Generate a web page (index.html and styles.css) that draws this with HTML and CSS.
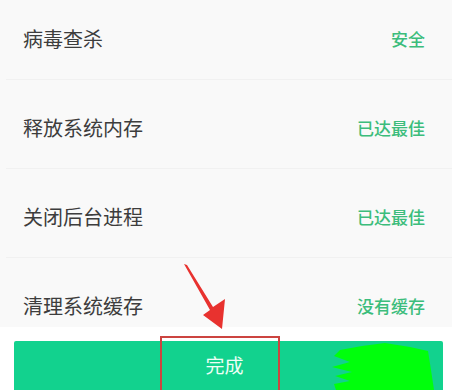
FILE: index.html
```html
<!DOCTYPE html>
<html lang="zh-CN">
<head>
  <meta charset="UTF-8" />
  <meta name="viewport" content="width=device-width, initial-scale=1.0"/>
  <title>清理完成</title>
  <link rel="stylesheet" href="styles.css">
</head>
<body>
  <div class="screen">
    <div class="list-wrap">
      <div class="list">
        <div class="row">
          <span class="label">病毒查杀</span>
          <span class="status">安全</span>
        </div>
        <div class="row">
          <span class="label">释放系统内存</span>
          <span class="status">已达最佳</span>
        </div>
        <div class="row">
          <span class="label">关闭后台进程</span>
          <span class="status">已达最佳</span>
        </div>
        <div class="row">
          <span class="label">清理系统缓存</span>
          <span class="status">没有缓存</span>
        </div>
      </div>
    </div>

    <div class="footer">
      <button class="done-btn">完成</button>
    </div>

    <!-- annotation marks drawn over the screenshot -->
    <svg class="arrow" width="452" height="390" viewBox="0 0 452 390">
      <polygon points="184,264 187,265 213,307 225,299 222,329 203,315 210,310" fill="#e8322f"/>
    </svg>
    <div class="highlight"></div>
    <svg class="scribble" width="452" height="390" viewBox="0 0 452 390">
      <path d="M340,350 L362,346 L385,343 L410,347 L428,351 L431,370 L434,390 L336,390 L334,384 L350,381 L335,376 L352,372 L332,367 L350,362 L334,356 Z" fill="#00ff0c"/>
    </svg>
  </div>
</body>
</html>
```

FILE: styles.css
```css
body {
  margin: 0;
  padding: 0;
  background: #fff;
  font-family: "Noto Sans CJK SC", "Noto Sans", sans-serif;
}
.screen {
  position: relative;
  width: 452px;
  height: 390px;
  overflow: hidden;
}
.list-wrap {
  height: 327px;
  overflow: hidden;
  background: #f9f9f9;
}
.list {
  margin-top: -9px;
}
.row {
  box-sizing: border-box;
  height: 89px;
  margin-left: 6px;
  padding: 7px 27px 0 17px;
  display: flex;
  align-items: center;
  justify-content: space-between;
  border-bottom: 1px solid #f1f1f1;
}
.label {
  font-size: 20px;
  color: #3d3d3d;
}
.status {
  font-size: 17px;
  font-weight: 500;
  color: #3cbd7c;
}
.footer {
  height: 63px;
  padding: 14px 9px 0 14px;
  box-sizing: border-box;
  background: #fff;
}
.done-btn {
  display: block;
  width: 100%;
  height: 60px;
  border: none;
  border-radius: 2px;
  background: #12d28e;
  color: #eefff6;
  font-family: inherit;
  font-size: 19px;
  padding: 0 0 14px 0;
  text-indent: -8px;
}
.arrow,
.scribble {
  position: absolute;
  left: 0;
  top: 0;
}
.highlight {
  position: absolute;
  left: 160px;
  top: 336px;
  width: 116px;
  height: 60px;
  border: 2px solid #cc4440;
}
```
